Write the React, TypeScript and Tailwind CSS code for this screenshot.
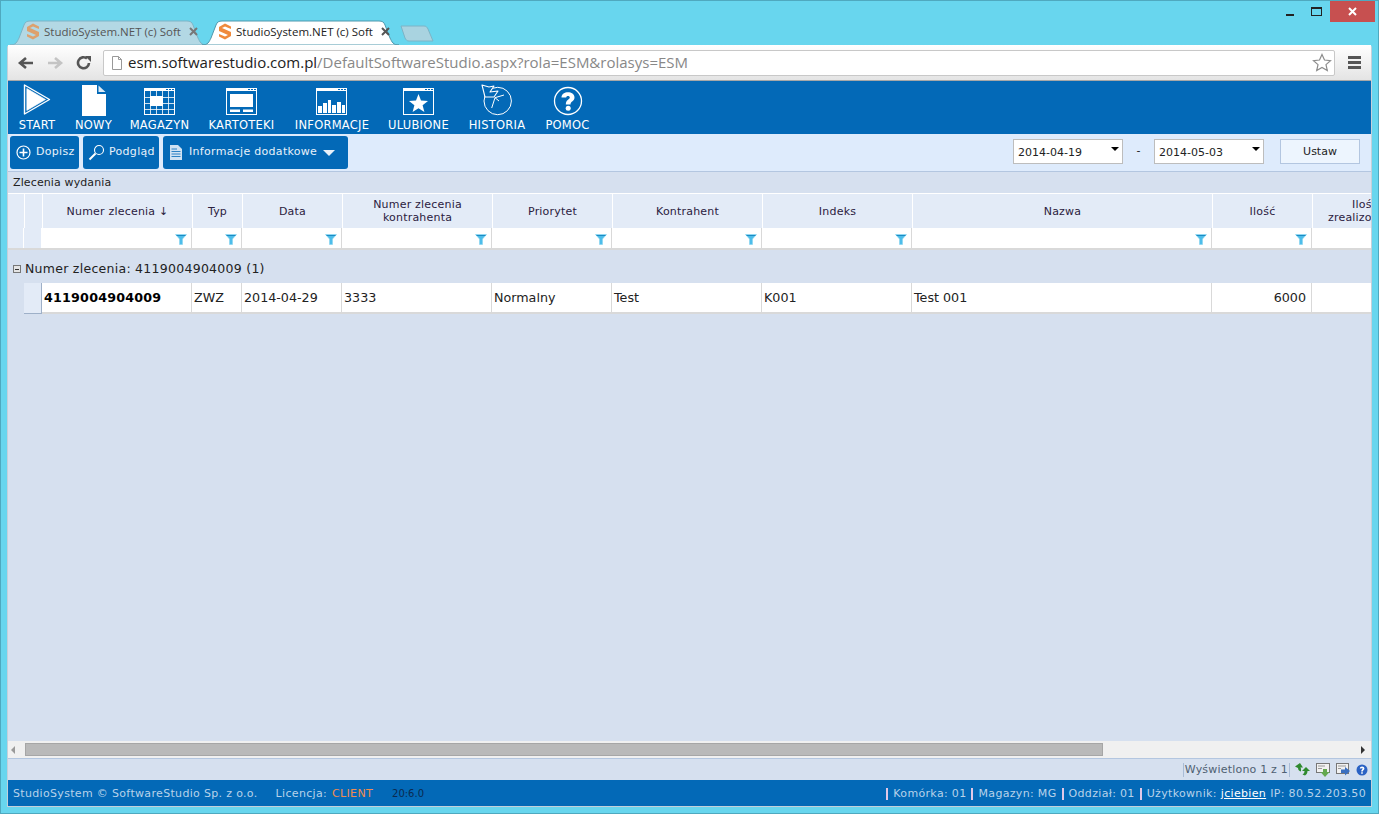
import { ReactNode } from "react";

const ui = "font-['Open_Sans',sans-serif]";
const app = "font-['DejaVu_Sans',sans-serif]";

const columns = [
  { label: "Numer zlecenia ↓", filter: true },
  { label: "Typ", filter: true },
  { label: "Data", filter: true },
  { label: "Numer zlecenia kontrahenta", filter: true },
  { label: "Priorytet", filter: true },
  { label: "Kontrahent", filter: true },
  { label: "Indeks", filter: true },
  { label: "Nazwa", filter: true },
  { label: "Ilość", filter: true },
  { label: "Ilość zrealizowana", filter: false },
];

const row = ["4119004904009", "ZWZ", "2014-04-29", "3333", "Normalny", "Test", "K001", "Test 001", "6000", ""];

const headCols = "grid grid-cols-[17px_18px_150px_50px_100px_150px_120px_150px_150px_300px_100px_105px]";
const gridCols = "grid grid-cols-[16px_18px_150px_50px_100px_150px_120px_150px_150px_300px_100px_105px]";
const gridW = "w-[1405px]";

const SLogo = ({ faded }: { faded?: boolean }) => (
  <svg width="14" height="17" viewBox="0 0 14 17" className={faded ? "opacity-70" : ""}>
    <path d="M1 4 L7 0.5 L13 3.5 V6 L7 3.5 L4 5 L13 9 V13 L7 16.5 L1 13.5 V11 L7 13.5 L10 12 L1 8 Z" fill="#f08a3c" />
  </svg>
);

const Tab = ({ active }: { active?: boolean }) => (
  <div className={`relative -mr-[5px] flex h-[25px] w-[197px] items-center pb-[2px] pl-[16px] ${active ? "z-10" : ""}`}>
    <svg className="absolute inset-0" width="197" height="25" viewBox="0 0 197 25">
      <path
        d="M0 25 C6 25 7 22 9 18 L14 5 C15 2 17 1 20 1 H177 C180 1 182 2 183 5 L188 18 C190 22 191 25 197 25 Z"
        fill={active ? "#ffffff" : "#b3d8e4"}
        stroke={active ? "#4f98ad" : "#7cb4c6"}
      />
    </svg>
    <span className="relative mr-[4px] flex">
      <SLogo faded={!active} />
    </span>
    <span className={`relative w-[137px] whitespace-nowrap text-[11.5px] ${ui} ${active ? "text-[#222]" : "text-[#555]"}`}>
      StudioSystem.NET (c) Soft
    </span>
    <svg className="relative ml-[8px]" width="9" height="9" viewBox="0 0 9 9">
      <path d="M1 1 L8 8 M8 1 L1 8" stroke={active ? "#555" : "#777"} strokeWidth="2" />
    </svg>
  </div>
);

const Funnel = () => (
  <svg width="12" height="11" viewBox="0 0 12 11">
    <path d="M0.5 0.5 H11.5 L7.5 5 V10.5 H4.5 V5 Z" fill="#4dbdea" stroke="#86d4f0" strokeWidth="0.6" />
    <path d="M1.5 1.5 H10.5" stroke="#1c8cc4" strokeWidth="1" />
  </svg>
);

const NavItem = ({ label, icon, width }: { label: string; icon: ReactNode; width: string }) => (
  <div className={`flex flex-col items-center ${width}`}>
    <div className="flex h-[33px] items-end justify-center">{icon}</div>
    <span className={`mt-[3px] whitespace-nowrap text-[11.5px] leading-[13px] tracking-[0.25px] text-white ${app}`}>{label}</span>
  </div>
);

const WinIcon = ({ children }: { children: ReactNode }) => (
  <svg width="32" height="28" viewBox="0 0 32 28">
    <rect x="0.5" y="0.5" width="30" height="26" fill="none" stroke="#fff" />
    <rect x="0" y="0" width="31" height="3" fill="#fff" />
    <path d="M22 1.5 h2 M25 1.5 h2 M28 1.5 h2" stroke="#0369b7" />
    {children}
  </svg>
);

const ActionBtn = ({ children }: { children: ReactNode }) => (
  <div className={`flex h-[33px] items-center rounded-[3px] bg-[#0369b7] text-[11px] tracking-[0.3px] text-[#e8f1fa] ${app}`}>{children}</div>
);

const DateBox = ({ value }: { value: string }) => (
  <div className={`relative h-[25px] w-[110px] border border-[#bdbdbd] bg-white pl-[4px] text-[11px] leading-[25px] text-[#222] ${app}`}>
    {value}
    <span className="absolute right-[3px] top-[7px] h-0 w-0 border-x-[4px] border-t-[4px] border-x-transparent border-t-black" />
  </div>
);

export default function App() {
  return (
    <div className="relative h-[814px] w-[1379px] overflow-hidden border border-[#4fa9bf] bg-[#68d6ee]">
      {/* window buttons */}
      <div className="absolute right-[3px] top-0 flex h-[21px] items-stretch">
        <div className="flex w-[27px] items-center justify-center pt-[6px]">
          <span className="block h-[2px] w-[8px] bg-[#222]" />
        </div>
        <div className="flex w-[27px] items-center justify-center">
          <span className="block h-[9px] w-[11px] border border-t-2 border-[#222]" />
        </div>
        <div className="flex w-[45px] items-center justify-center bg-[#c75050]">
          <svg width="9" height="9" viewBox="0 0 9 9">
            <path d="M1 1 L8 8 M8 1 L1 8" stroke="#fff" strokeWidth="2" />
          </svg>
        </div>
      </div>

      {/* tabs */}
      <div className="flex h-[44px] items-end pl-[9px]">
        <Tab />
        <Tab active />
        <svg className="mb-[3px] ml-[6px]" width="34" height="17" viewBox="0 0 34 17">
          <path d="M1 1 H24 C26 1 27 2 28 4 L33 16 H9 C7 16 6 15 5 13 Z" fill="#a9d3e0" stroke="#7cb4c6" />
        </svg>
      </div>

      <div className="mx-[6px] flex h-[762px] flex-col rounded-t-[3px] border border-t-0 border-[#c3d0da] bg-[#d6e0ef]">
        {/* address bar */}
        <div className="flex h-[36px] shrink-0 items-center border-b border-[#a8a8a8] bg-gradient-to-b from-white to-[#e4e4e4]">
          <div className="flex w-[95px] items-center pl-[9px]">
            <svg width="18" height="14" viewBox="0 0 18 14">
              <path d="M16 7 H4 M9 2 L3 7 L9 12" fill="none" stroke="#555" strokeWidth="2.6" />
            </svg>
            <svg className="ml-[11px]" width="18" height="14" viewBox="0 0 18 14">
              <path d="M2 7 H14 M9 2 L15 7 L9 12" fill="none" stroke="#c4c4c4" strokeWidth="2.6" />
            </svg>
            <svg className="ml-[12px]" width="16" height="16" viewBox="0 0 16 16">
              <path d="M13 8 A5.5 5.5 0 1 1 11 3.5" fill="none" stroke="#555" strokeWidth="2.6" />
              <path d="M9 1 L15 1 L15 7 Z" fill="#555" />
            </svg>
          </div>
          <div className="flex h-[26px] w-[1232px] items-center rounded-[2px] border border-[#c8c8c8] bg-white pl-[7px]">
            <svg width="12" height="14" viewBox="0 0 12 14">
              <path d="M1.5 0.5 H7.5 L10.5 3.5 V13.5 H1.5 Z M7.5 0.5 V3.5 H10.5" fill="#fff" stroke="#999" />
            </svg>
            <span className={`ml-[5px] whitespace-nowrap text-[15px] ${ui}`}>
              <span className="text-[#222]">esm.softwarestudio.com.pl</span>
              <span className="text-[#888]">/DefaultSoftwareStudio.aspx?rola=ESM&amp;rolasys=ESM</span>
            </span>
            <svg className="ml-auto mr-[2px]" width="20" height="19" viewBox="0 0 20 19">
              <path d="M10 1.5 L12.5 7 L18.5 7.6 L14 11.6 L15.3 17.5 L10 14.5 L4.7 17.5 L6 11.6 L1.5 7.6 L7.5 7 Z" fill="#fff" stroke="#8c8c8c" strokeWidth="1.2" />
            </svg>
          </div>
          <div className="ml-[13px] flex flex-col gap-[2px]">
            <span className="h-[3px] w-[13px] bg-[#555]" />
            <span className="h-[3px] w-[13px] bg-[#555]" />
            <span className="h-[3px] w-[13px] bg-[#555]" />
          </div>
        </div>

        {/* main menu */}
        <div className="flex h-[53px] shrink-0 items-start gap-[20px] bg-[#0369b7] pl-[10px] pt-[2px]">
          <NavItem
            label="START"
            width="w-[38px]"
            icon={
              <svg width="28" height="33" viewBox="0 0 28 33" fill="none" strokeLinejoin="round">
                <path d="M1.5 2 L26.5 16.5 L1.5 31 Z" stroke="#fff" strokeWidth="1.4" />
                <path d="M3.8 5.5 L22.5 16.5 L3.8 27.5 Z" fill="#fff" stroke="#fff" strokeWidth="0.6" />
              </svg>
            }
          />
          <NavItem
            label="NOWY"
            width="w-[35px]"
            icon={
              <svg width="24" height="31" viewBox="0 0 24 31">
                <path d="M0 0 H15 V9 H24 V31 H0 Z" fill="#fff" />
                <path d="M16.5 0.5 L23.5 7 H16.5 Z" fill="#dbe9f5" />
              </svg>
            }
          />
          <NavItem
            label="MAGAZYN"
            width="w-[57px]"
            icon={
              <WinIcon>
                <path d="M0.5 9.5 H30.5 M0.5 15.5 H30.5 M0.5 21.5 H30.5 M6.5 3 V27 M12.5 3 V27 M18.5 3 V27 M24.5 3 V27" stroke="#fff" strokeWidth="0.8" />
                <rect x="6" y="8" width="13" height="10" fill="#fff" />
              </WinIcon>
            }
          />
          <NavItem
            label="KARTOTEKI"
            width="w-[67px]"
            icon={
              <WinIcon>
                <rect x="4" y="6" width="23" height="13" fill="#fff" />
                <rect x="4" y="21.5" width="10" height="2.5" fill="#fff" />
                <rect x="17" y="21.5" width="10" height="2.5" fill="#fff" />
              </WinIcon>
            }
          />
          <NavItem
            label="INFORMACJE"
            width="w-[74px]"
            icon={
              <WinIcon>
                <path d="M2 25 V18 H6 V25 Z M7 25 V15 H11 V25 Z M12 25 V12 H15 V25 Z M16 25 V17 H20 V25 Z M21 25 V14 H25 V25 Z M26 25 V17 H29 V25 Z" fill="#fff" />
              </WinIcon>
            }
          />
          <NavItem
            label="ULUBIONE"
            width="w-[59px]"
            icon={
              <WinIcon>
                <path d="M15.5 6 L18 12.5 L25 13 L19.6 17.3 L21.4 24 L15.5 20.2 L9.6 24 L11.4 17.3 L6 13 L13 12.5 Z" fill="#fff" />
              </WinIcon>
            }
          />
          <NavItem
            label="HISTORIA"
            width="w-[58px]"
            icon={
              <svg width="32" height="32" viewBox="0 0 32 32" fill="none" stroke="#fff">
                <circle cx="16.7" cy="17" r="13.7" />
                <path d="M1 1 L8 3 L13 2 L9 8 L17 7 L13 13 L4 13 Z" fill="#0369b7" strokeWidth="1.1" strokeLinejoin="round" />
                <path d="M23 11 L14 13.7 L10.7 24 M14 13.7 L18 17" />
              </svg>
            }
          />
          <NavItem
            label="POMOC"
            width="w-[43px]"
            icon={
              <svg width="30" height="30" viewBox="0 0 30 30">
                <circle cx="15" cy="15" r="13.5" fill="none" stroke="#fff" strokeWidth="1.3" />
                <path d="M8.5 11.5 C8.5 4.5 21.5 4.5 21.5 11.5 C21.5 15.5 17.5 15 17.5 18.5 H12.8 C12.8 13.5 16.8 13.5 16.8 11.5 C16.8 9.5 13.2 9.5 13.2 11.5 Z" fill="#fff" />
                <circle cx="15.2" cy="22.3" r="2.5" fill="#fff" />
              </svg>
            }
          />
        </div>

        {/* action bar */}
        <div className="flex h-[38px] shrink-0 items-center border-b border-[#b3c6e0] bg-[#deebfc] pl-[2px] pr-[11px]">
          <ActionBtn>
            <span className="flex w-[69px] items-center pl-[6px]">
              <svg width="15" height="15" viewBox="0 0 15 15" fill="none" stroke="#fff">
                <circle cx="7.5" cy="7.5" r="6.5" strokeWidth="1.2" />
                <path d="M7.5 3.5 V11.5 M3.5 7.5 H11.5" strokeWidth="1.6" />
              </svg>
              <span className="ml-[5px]">Dopisz</span>
            </span>
          </ActionBtn>
          <div className="ml-[4px]">
            <ActionBtn>
              <span className="flex w-[76px] items-center pl-[5px]">
                <svg width="17" height="17" viewBox="0 0 17 17" fill="none" stroke="#fff">
                  <circle cx="11" cy="6" r="4.5" strokeWidth="1.1" />
                  <path d="M7.5 9.5 L1.5 15.5" strokeWidth="2" />
                </svg>
                <span className="ml-[4px]">Podgląd</span>
              </span>
            </ActionBtn>
          </div>
          <div className="ml-[4px]">
            <ActionBtn>
              <span className="flex w-[185px] items-center pl-[7px]">
                <svg width="12" height="15" viewBox="0 0 12 15">
                  <path d="M0 0 H8 L12 4 V15 H0 Z" fill="#cfe2f3" />
                  <path d="M1.5 4 H7 M1.5 6.5 H10.5 M1.5 9 H10.5 M1.5 11.5 H10.5" stroke="#0369b7" strokeWidth="0.8" />
                </svg>
                <span className="ml-[7px]">Informacje dodatkowe</span>
                <span className="ml-[6px] h-0 w-0 border-x-[6px] border-t-[6px] border-x-transparent border-t-[#e8f1fa]" />
              </span>
            </ActionBtn>
          </div>
          <div className="ml-auto mb-[2px] flex items-center">
            <DateBox value="2014-04-19" />
            <span className={`w-[31px] text-center text-[11px] text-[#222] ${app}`}>-</span>
            <DateBox value="2014-05-03" />
            <div className={`ml-[16px] flex h-[25px] w-[80px] items-center justify-center border border-[#b3c6e0] bg-[#edf5fe] pt-[2px] text-[11px] text-[#222] ${app}`}>
              Ustaw
            </div>
          </div>
        </div>

        <div className={`h-[21px] shrink-0 pl-[5px] text-[11px] leading-[22px] tracking-[0.12px] text-[#222] ${app}`}>Zlecenia wydania</div>

        {/* grid */}
        <div className={`flex min-h-0 flex-1 flex-col overflow-hidden ${app}`}>
          <div className={`${headCols} ${gridW} h-[35px] shrink-0 border-t border-white bg-[#e3ebf7]`}>
            <div className="border-r border-white" />
            <div className="border-r border-white" />
            {columns.map((c) => (
              <div key={c.label} className="flex items-center justify-center border-r border-white px-[4px] text-center text-[11px] leading-[13px] tracking-[0.2px] text-[#2b2140]">
                {c.label}
              </div>
            ))}
          </div>
          <div className={`${gridCols} ${gridW} h-[22px] shrink-0 border-b-2 border-[#d9d9d9] bg-white`}>
            <div className="border-r border-white bg-[#e3ebf7]" />
            <div className="border-r border-white bg-[#e3ebf7]" />
            {columns.map((c) => (
              <div key={c.label} className="flex items-center justify-end border-r border-[#d9d9d9] pr-[4px] pt-[2px]">
                {c.filter && <Funnel />}
              </div>
            ))}
          </div>
          <div className="mt-[2px] flex h-[31px] shrink-0 items-center pl-[5px] pt-[3px] text-[12.5px] tracking-[0.27px] text-[#222]">
            <span className="mr-[4px] flex h-[8px] w-[8px] items-center justify-center border border-[#777] bg-[#e4e4e4]">
              <span className="h-px w-[4px] bg-[#333]" />
            </span>
            Numer zlecenia: 4119004904009 (1)
          </div>
          <div className={`${gridCols} ${gridW} h-[31px] shrink-0 text-[12.7px] leading-[29px] text-[#222]`}>
            <div />
            <div className="border-b border-r border-[#9eb0c8] bg-[#e3ebf7]" />
            {row.map((v, i) => (
              <div
                key={i}
                className={`truncate border-b-2 border-r border-[#d9d9d9] bg-white px-[2px] ${i === 0 ? "font-bold tracking-[0.2px] text-black" : ""} ${i === 8 ? "pr-[5px] text-right" : ""}`}
              >
                {v}
              </div>
            ))}
          </div>
          <div className="flex-1" />

          {/* scrollbar */}
          <div className="flex h-[18px] shrink-0 items-center border-b border-[#b3c6e0] bg-[#f0f0f0]">
            <span className="ml-[3px] h-0 w-0 border-y-[4px] border-r-[4px] border-y-transparent border-r-[#9a9a9a]" />
            <div className="ml-[10px] h-[13px] w-[1078px] border border-[#a6a6a6] bg-[#b9b9b9]" />
            <span className="ml-auto mr-[6px] h-0 w-0 border-y-[4px] border-l-[4px] border-y-transparent border-l-[#333]" />
          </div>

          {/* pager */}
          <div className="flex h-[21px] shrink-0 items-center justify-end pr-[3px] text-[11px] text-[#4f6072]">
            <span className="border-x border-[#a9bcd6] px-[1px] leading-[14px] tracking-[0.2px]">Wyświetlono 1 z 1</span>
            <svg className="ml-[5px]" width="15" height="13" viewBox="0 0 15 13">
              <path d="M5 0 L0 3.5 L3 5 C3 7 4 8 6 8.5 L6 5.5 C5.5 5 5.5 4.5 5.5 4.5 L8 4.5 Z M11 4 L7 8 H9.5 C9.5 9.5 9 10.5 7.5 11.5 L10 12.5 C11.5 11.5 12.5 10 12.5 8 H15 Z" fill="#2f8a2f" />
            </svg>
            <svg className="ml-[6px]" width="14" height="14" viewBox="0 0 14 14">
              <rect x="0.5" y="0.5" width="13" height="9" fill="#f1f1f1" stroke="#777" />
              <path d="M2 3 H9 M2 5.5 H6" stroke="#999" />
              <path d="M7 6 H11 V9 H13.5 L9 14 L4.5 9 H7 Z" fill="#64a84e" />
            </svg>
            <svg className="ml-[6px]" width="14" height="14" viewBox="0 0 14 14">
              <rect x="0.5" y="0.5" width="12" height="10" fill="#f1f1f1" stroke="#777" />
              <path d="M2 3 H10 M2 5.5 H5" stroke="#999" />
              <path d="M5 6.5 H9 V4 L14 8 L9 12.5 V10 H5 Z" fill="#3a6fc0" />
            </svg>
            <svg className="ml-[6px]" width="12" height="12" viewBox="0 0 12 12">
              <circle cx="6" cy="6" r="5.5" fill="#2a62c4" />
              <path d="M3.8 4.6 C3.8 1.8 8.4 1.8 8.4 4.6 C8.4 6.2 6.8 6.2 6.8 7.6 H5.2 C5.2 5.6 6.6 5.6 6.6 4.6 C6.6 3.8 5.4 3.8 5.4 4.6 Z M5.2 8.3 H6.8 V9.8 H5.2 Z" fill="#fff" />
            </svg>
          </div>

          {/* status bar */}
          <div className="flex h-[26px] shrink-0 items-center justify-between bg-[#0369b7] pl-[5px] pr-[5px] pt-[2px] text-[11px] tracking-[0.33px] text-[#b7d2ea]">
            <div className="flex items-center">
              <span>StudioSystem © SoftwareStudio Sp. z o.o.</span>
              <span className="ml-[18px]">Licencja: </span>
              <span className="ml-[5px] text-[#f08c50]">CLIENT</span>
              <span className="ml-[19px] -mt-[2px] text-[10px] tracking-normal text-[#0a2a50]">20:6.0</span>
            </div>
            <div className="flex items-center">
              <span className="border-l-2 border-[#e0c8e8] pl-[5px] leading-[12px]">Komórka: 01</span>
              <span className="ml-[5px] border-l-2 border-[#e0c8e8] pl-[5px] leading-[12px]">Magazyn: MG</span>
              <span className="ml-[5px] border-l-2 border-[#e0c8e8] pl-[5px] leading-[12px]">Oddział: 01</span>
              <span className="ml-[5px] border-l-2 border-[#e0c8e8] pl-[5px] leading-[12px]">Użytkownik:</span>
              <span className="ml-[4px] text-white underline">jciebien</span>
              <span className="ml-[4px]">IP: 80.52.203.50</span>
            </div>
          </div>
        </div>
      </div>
    </div>
  );
}
